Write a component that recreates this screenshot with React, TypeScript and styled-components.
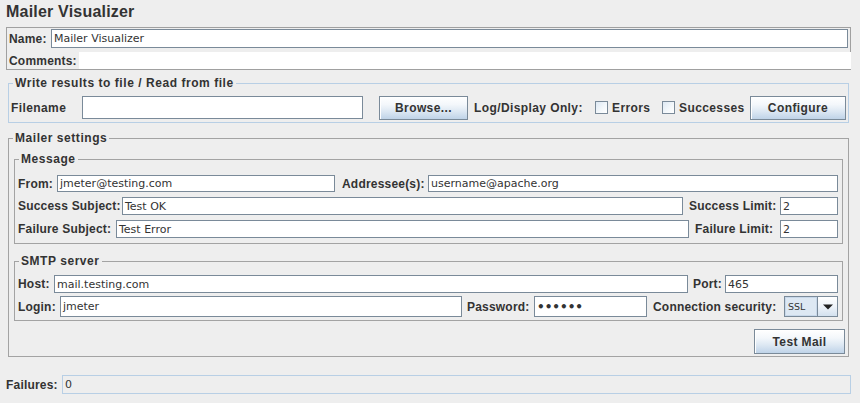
import React from "react";
import styled, { createGlobalStyle, css } from "styled-components";

const GlobalStyle = createGlobalStyle`
  html, body { margin: 0; padding: 0; background: #eeeeee; }
  body { font-family: "DejaVu Sans", sans-serif; color: #333333; }
  * { box-sizing: border-box; }
`;

const labelFont = css`
  font-family: "Liberation Sans", Arial, sans-serif;
  font-weight: bold;
  font-size: 12px;
  letter-spacing: 0.2px;
  color: #333333;
`;

const Page = styled.div`
  width: 860px;
  height: 403px;
  padding: 0 9px 0 6px;
  background: #eeeeee;
  overflow: hidden;
`;

const Title = styled.div`
  height: 27px;
  line-height: 24px;
  font-family: "Liberation Sans", Arial, sans-serif;
  font-weight: bold;
  font-size: 16px;
  letter-spacing: 0.2px;
  color: #333333;
`;

const NamePanel = styled.div`
  border: 1px solid #a0a0a0;
  padding-top: 1px;
  height: 43px;
`;

const FormRow = styled.div<{ $h: number; $mt?: number; $pl?: number; $pr?: number; $align?: string }>`
  display: flex;
  align-items: ${(p) => p.$align ?? "center"};
  height: ${(p) => p.$h}px;
  margin-top: ${(p) => p.$mt ?? 0}px;
  padding-left: ${(p) => p.$pl ?? 0}px;
  padding-right: ${(p) => p.$pr ?? 0}px;
`;

const Label = styled.span<{ $w: number; $pl?: number }>`
  ${labelFont};
  flex: none;
  width: ${(p) => p.$w}px;
  padding-left: ${(p) => p.$pl ?? 0}px;
  white-space: nowrap;
`;

const TextField = styled.div<{ $w?: number; $h?: number; $readonly?: boolean }>`
  ${(p) => (p.$w ? `flex: none; width: ${p.$w}px;` : "flex: 1; min-width: 0;")}
  ${(p) => (p.$h ? `height: ${p.$h}px; align-self: flex-start;` : "align-self: stretch;")}
  display: flex;
  align-items: center;
  padding-left: 2px;
  border: 1px solid ${(p) => (p.$readonly ? "#b8cfe5" : "#7a8a99")};
  background: ${(p) => (p.$readonly ? "#eeeeee" : "#ffffff")};
  font-family: "DejaVu Sans", sans-serif;
  font-size: 11px;
  color: #333333;
  white-space: nowrap;
  overflow: hidden;
`;

const PasswordDots = styled.span`
  font-family: "DejaVu Sans", sans-serif;
  font-size: 12px;
  font-weight: bold;
  letter-spacing: 0;
`;

const CommentsArea = styled.div`
  flex: 1;
  align-self: stretch;
  background: #ffffff;
  margin-right: -1px;
`;

const Group = styled.fieldset<{ $tone: "gray" | "blue"; $mt?: number; $mx?: number }>`
  margin: ${(p) => p.$mt ?? 0}px ${(p) => p.$mx ?? 0}px 0;
  padding: 0;
  min-width: 0;
  border: 1px solid ${(p) => (p.$tone === "blue" ? "#b8cfe5" : "#a3a3a3")};
`;

const Legend = styled.legend`
  ${labelFont};
  letter-spacing: 0.55px;
  margin-left: 4px;
  padding: 0 2px;
  height: 13px;
  line-height: 13px;
`;

const GroupBody = styled.div<{ $pt: number; $pb: number; $pl?: number; $pr?: number }>`
  padding: ${(p) => p.$pt}px ${(p) => p.$pr ?? 0}px ${(p) => p.$pb}px ${(p) => p.$pl ?? 0}px;
`;

const Button = styled.button<{ $w: number; $h: number; $ml?: number; $mr?: number }>`
  ${labelFont};
  letter-spacing: 0.4px;
  flex: none;
  width: ${(p) => p.$w}px;
  height: ${(p) => p.$h}px;
  margin-left: ${(p) => p.$ml ?? 0}px;
  margin-right: ${(p) => p.$mr ?? 0}px;
  padding: 0;
  border: 1px solid #7a8a99;
  box-shadow: inset 1px 1px 0 #ffffff;
  background: linear-gradient(to bottom, #ffffff 0%, #f3f7fb 35%, #dde8f3 65%, #bfd3e8 100%);
  cursor: default;
`;

const CheckBox = styled.span`
  flex: none;
  width: 13px;
  height: 13px;
  margin-top: 5px;
  border: 1px solid #7a8a99;
  background: linear-gradient(135deg, #dde8f3 0%, #f4f8fb 60%, #ffffff 100%);
`;

const InlineLabel = styled(Label)`
  line-height: 24px;
  letter-spacing: 0.4px;
`;

const ButtonRow = styled.div`
  display: flex;
  justify-content: flex-end;
  margin-top: 8px;
  margin-right: -2px;
`;

const Combo = styled.div<{ $w: number }>`
  flex: none;
  width: ${(p) => p.$w}px;
  align-self: stretch;
  display: flex;
  border: 1px solid #7a8a99;
`;

const ComboValue = styled.div`
  flex: 1;
  display: flex;
  align-items: center;
  padding-left: 2px;
  background: #dde8f3;
  border: 1px solid #c8d8ea;
  font-family: "DejaVu Sans", sans-serif;
  font-size: 9.5px;
  color: #333333;
`;

const ComboArrow = styled.div`
  flex: none;
  width: 20px;
  display: flex;
  align-items: center;
  justify-content: center;
  border-left: 1px solid #7a8a99;
  background: linear-gradient(to bottom, #ffffff 0%, #eef3f9 50%, #d3e1ef 100%);
`;

export default function App() {
  return (
    <>
      <GlobalStyle />
      <Page>
        <Title>Mailer Visualizer</Title>

        <NamePanel>
          <FormRow $h={19} $pl={2} $pr={2}>
            <Label $w={42}>Name:</Label>
            <TextField>Mailer Visualizer</TextField>
          </FormRow>
          <FormRow $h={17} $mt={4} $pl={2}>
            <Label $w={70}>Comments:</Label>
            <CommentsArea />
          </FormRow>
        </NamePanel>

        <Group $tone="blue" $mt={7} $mx={2}>
          <Legend>Write results to file / Read from file</Legend>
          <GroupBody $pt={6} $pb={2} $pl={2} $pr={2}>
            <FormRow $h={24} $align="flex-start">
              <InlineLabel $w={71}>Filename</InlineLabel>
              <TextField $w={281} $h={23} />
              <Button $w={89} $h={24} $ml={16}>Browse...</Button>
              <InlineLabel $w={127} $pl={6}>Log/Display Only:</InlineLabel>
              <CheckBox />
              <InlineLabel $w={54} $pl={4}>Errors</InlineLabel>
              <CheckBox />
              <InlineLabel $w={75} $pl={4}>Successes</InlineLabel>
              <Button $w={96} $h={24}>Configure</Button>
            </FormRow>
          </GroupBody>
        </Group>

        <Group $tone="gray" $mt={9} $mx={2}>
          <Legend>Mailer settings</Legend>
          <GroupBody $pt={8} $pb={2} $pl={5} $pr={5}>
            <Group $tone="gray">
              <Legend>Message</Legend>
              <GroupBody $pt={9} $pb={5} $pl={3} $pr={4}>
                <FormRow $h={17}>
                  <Label $w={39}>From:</Label>
                  <TextField $w={278}>jmeter@testing.com</TextField>
                  <Label $w={93} $pl={7}>Addressee(s):</Label>
                  <TextField>username@apache.org</TextField>
                </FormRow>
                <FormRow $h={18} $mt={5}>
                  <Label $w={104}>Success Subject:</Label>
                  <TextField $w={561}>Test OK</TextField>
                  <Label $w={97} $pl={6}>Success Limit:</Label>
                  <TextField>2</TextField>
                </FormRow>
                <FormRow $h={18} $mt={5}>
                  <Label $w={98}>Failure Subject:</Label>
                  <TextField $w={573}>Test Error</TextField>
                  <Label $w={91} $pl={6}>Failure Limit:</Label>
                  <TextField>2</TextField>
                </FormRow>
              </GroupBody>
            </Group>

            <Group $tone="gray" $mt={11}>
              <Legend>SMTP server</Legend>
              <GroupBody $pt={7} $pb={3} $pl={3} $pr={4}>
                <FormRow $h={18}>
                  <Label $w={36}>Host:</Label>
                  <TextField $w={634}>mail.testing.com</TextField>
                  <Label $w={37} $pl={5}>Port:</Label>
                  <TextField>465</TextField>
                </FormRow>
                <FormRow $h={21} $mt={3}>
                  <Label $w={42}>Login:</Label>
                  <TextField $w={402}>jmeter</TextField>
                  <Label $w={72} $pl={5}>Password:</Label>
                  <TextField $w={113}>
                    <PasswordDots>••••••</PasswordDots>
                  </TextField>
                  <Label $w={137} $pl={6}>Connection security:</Label>
                  <Combo $w={54}>
                    <ComboValue>SSL</ComboValue>
                    <ComboArrow>
                      <svg width="10" height="6" viewBox="0 0 10 6">
                        <path d="M0 0.5 H10 L5 5.5 Z" fill="#222" />
                      </svg>
                    </ComboArrow>
                  </Combo>
                </FormRow>
              </GroupBody>
            </Group>

            <ButtonRow>
              <Button $w={91} $h={25}>Test Mail</Button>
            </ButtonRow>
          </GroupBody>
        </Group>

        <FormRow $h={19} $mt={18}>
          <Label $w={56}>Failures:</Label>
          <TextField $readonly>0</TextField>
        </FormRow>
      </Page>
    </>
  );
}
